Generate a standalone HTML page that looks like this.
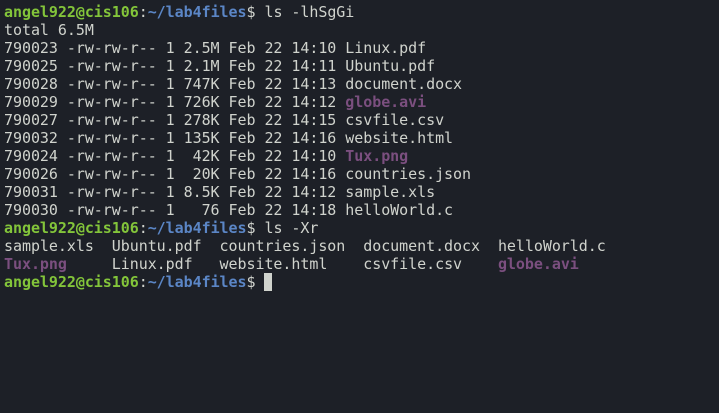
<!DOCTYPE html>
<html><head><meta charset="utf-8"><style>
html,body{margin:0;padding:0;background:#1d2027;width:719px;height:413px;overflow:hidden}
pre{margin:0;position:absolute;left:4px;top:3px;font-family:"DejaVu Sans Mono","Liberation Mono",monospace;font-size:15px;letter-spacing:-0.05px;line-height:18px;color:#d0d3cd}
.g{color:#83c53a;font-weight:bold}.b{color:#5b86c6;font-weight:bold}.p{color:#7b4f7f;font-weight:bold}
.c{display:inline-block;width:8px;height:18px;background:#d0d3cd;vertical-align:top}
</style></head><body><pre><span class="g">angel922@cis106</span>:<span class="b">~/lab4files</span>$ ls -lhSgGi
total 6.5M
790023 -rw-rw-r-- 1 2.5M Feb 22 14:10 Linux.pdf
790025 -rw-rw-r-- 1 2.1M Feb 22 14:11 Ubuntu.pdf
790028 -rw-rw-r-- 1 747K Feb 22 14:13 document.docx
790029 -rw-rw-r-- 1 726K Feb 22 14:12 <span class="p">globe.avi</span>
790027 -rw-rw-r-- 1 278K Feb 22 14:15 csvfile.csv
790032 -rw-rw-r-- 1 135K Feb 22 14:16 website.html
790024 -rw-rw-r-- 1  42K Feb 22 14:10 <span class="p">Tux.png</span>
790026 -rw-rw-r-- 1  20K Feb 22 14:16 countries.json
790031 -rw-rw-r-- 1 8.5K Feb 22 14:12 sample.xls
790030 -rw-rw-r-- 1   76 Feb 22 14:18 helloWorld.c
<span class="g">angel922@cis106</span>:<span class="b">~/lab4files</span>$ ls -Xr
sample.xls  Ubuntu.pdf  countries.json  document.docx  helloWorld.c
<span class="p">Tux.png</span>     Linux.pdf   website.html    csvfile.csv    <span class="p">globe.avi</span>
<span class="g">angel922@cis106</span>:<span class="b">~/lab4files</span>$ <span class="c"></span></pre></body></html>
